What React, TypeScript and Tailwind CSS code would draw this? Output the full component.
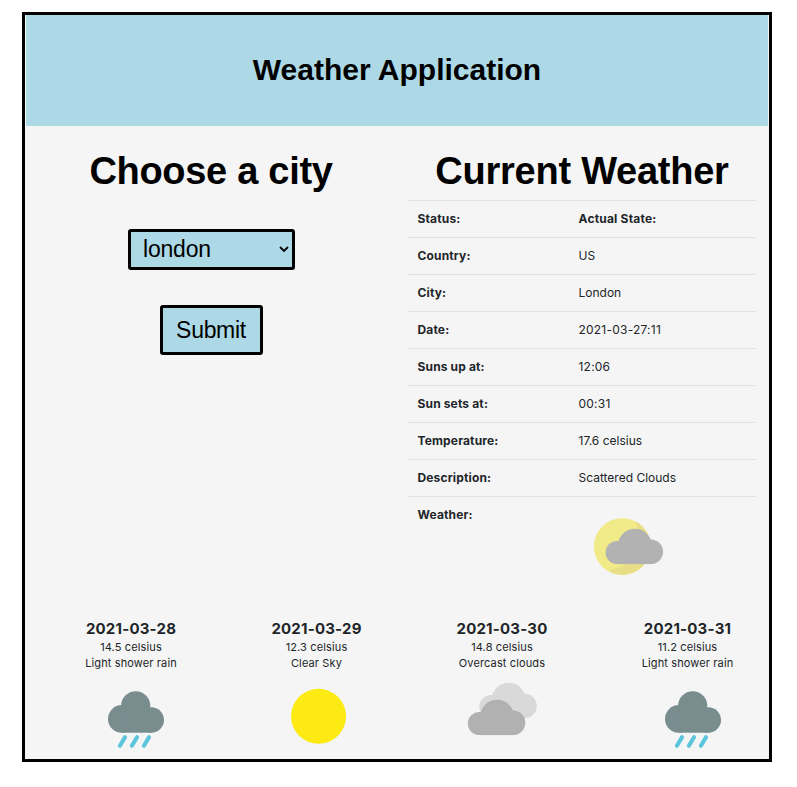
import React from 'react';

const ROWS: [string, string, boolean?][] = [
  ['Status:', 'Actual State:'],
  ['Country:', 'US'],
  ['City:', 'London'],
  ['Date:', '2021-03-27:11', true],
  ['Suns up at:', '12:06', true],
  ['Sun sets at:', '00:31', true],
  ['Temperature:', '17.6 celsius'],
  ['Description:', 'Scattered Clouds'],
];

function Cloud({ fill, x = 0, y = 0 }: { fill: string; x?: number; y?: number }) {
  return (
    <g fill={fill} transform={`translate(${x} ${y})`}>
      <circle cx="11.6" cy="23.8" r="11.6" />
      <circle cx="45.2" cy="23.1" r="12.3" />
      <circle cx="29.3" cy="17" r="17" />
      <rect x="11.6" y="18" width="33.6" height="17.4" />
    </g>
  );
}

function PartlyCloudy() {
  return (
    <svg width="120" height="90" viewBox="0 0 120 90" className="block">
      <defs>
        <clipPath id="sun">
          <circle cx="52.3" cy="46.6" r="28.4" />
        </clipPath>
      </defs>
      <circle cx="52.3" cy="46.6" r="28.4" fill="#f0ea88" />
      <path clipPath="url(#sun)" d="M64 19Q70 30 68 45Q62 66 40 70V80H90V19Z" fill="#e9de88" />
      <Cloud fill="#b2b2b2" x={35.6} y={28.7} />
    </svg>
  );
}

function Rain() {
  return (
    <svg width="100" height="84" viewBox="0 0 100 84" className="block">
      <g fill="#798d8f">
        <circle cx="31.8" cy="43.9" r="13.8" />
        <circle cx="61.3" cy="45" r="12.7" />
        <circle cx="45.7" cy="30.9" r="14.6" />
        <rect x="31.8" y="33" width="29.5" height="24.7" />
      </g>
      <path
        d="M35 62.2L29.9 70.8M47 62.2L41.9 70.8M59 62.2L53.9 70.8"
        stroke="#5bc5db"
        strokeWidth="4.1"
        strokeLinecap="round"
      />
    </svg>
  );
}

function Sun() {
  return (
    <svg width="100" height="84" viewBox="5.75 0 100 84" className="block">
      <circle cx="48.3" cy="41.3" r="27.5" fill="#fcea12" />
    </svg>
  );
}

function Overcast() {
  return (
    <svg width="100" height="84" viewBox="11.25 0 100 84" className="block">
      <Cloud fill="#d9d9d9" x={29.6} y={7.8} />
      <Cloud fill="#b1b1b1" x={18.1} y={24.7} />
    </svg>
  );
}

const DAYS = [
  { date: '2021-03-28', temp: '14.5 celsius', text: 'Light shower rain', Icon: Rain },
  { date: '2021-03-29', temp: '12.3 celsius', text: 'Clear Sky', Icon: Sun },
  { date: '2021-03-30', temp: '14.8 celsius', text: 'Overcast clouds', Icon: Overcast },
  { date: '2021-03-31', temp: '11.2 celsius', text: 'Light shower rain', Icon: Rain },
];

export default function App() {
  return (
    <div className="h-[787px] w-[797px] overflow-hidden bg-white pt-3 pl-[22px] font-['Inter',sans-serif] text-[#212529]">
      <div className="flex h-[750px] w-[750px] flex-col overflow-hidden border-[3px] border-black bg-[#f5f5f5]">
        <header className="mx-px flex h-[111px] shrink-0 items-center justify-center bg-[#add8e6] pb-0.5 font-['Liberation_Sans',Arial,sans-serif] text-black">
          <h1 className="text-[30px] leading-9 font-bold">Weather Application</h1>
        </header>

        <main className="flex h-[480px] shrink-0">
          <section className="flex w-[372px] flex-col items-center pt-[22px] font-['Liberation_Sans',Arial,sans-serif] text-black">
            <h2 className="text-[38px] leading-[46px] font-bold tracking-[-0.3px]">Choose a city</h2>
            <div className="relative mt-[35px] h-[41px] w-[167px]">
              <select className="h-full w-full appearance-none rounded-[3px] border-[3px] border-black bg-[#add8e6] pl-[12.5px] text-[23px] leading-[35px] tracking-[-0.2px] outline-none">
                <option>london</option>
              </select>
              <svg className="pointer-events-none absolute top-[17px] right-[6px]" width="10" height="7" viewBox="0 0 10 7" fill="none">
                <path d="M1 1L5 5L9 1" stroke="#000" strokeWidth="1.8" />
              </svg>
            </div>
            <button className="mt-[35px] h-[50px] w-[103px] rounded-[3px] border-[3px] border-black bg-[#add8e6] text-[23px] tracking-[-0.3px]">
              Submit
            </button>
          </section>

          <section className="ml-[11px] w-[348px] pt-[22px]">
            <h2 className="text-center font-['Liberation_Sans',Arial,sans-serif] text-[38px] leading-[46px] font-bold tracking-[-0.25px] whitespace-nowrap text-black">
              Current Weather
            </h2>
            <div className="mt-[6px] text-xs">
              {ROWS.map(([label, value, numeric], i) => (
                <div key={label} className="flex h-[37px] items-center border-t border-[#dee2e6] pl-[9.5px]">
                  <span className="w-[161px] font-bold tracking-[0.15px]">{label}</span>
                  <span className={i === 0 ? 'font-bold tracking-[0.2px]' : numeric ? 'tracking-[0.22px]' : ''}>
                    {value}
                  </span>
                </div>
              ))}
              <div className="flex border-t border-[#dee2e6] pl-[9.5px]">
                <span className="w-[152.5px] pt-[9px] leading-[18px] font-bold tracking-[0.15px]">Weather:</span>
                <div className="mt-[3px]">
                  <PartlyCloudy />
                </div>
              </div>
            </div>
          </section>
        </main>

        <footer className="ml-[13.25px] grid w-[742px] shrink-0 grid-cols-4 pt-[13px]">
          {DAYS.map(({ date, temp, text, Icon }) => (
            <div key={date} className="text-center">
              <h3 className="text-[15px] leading-5 font-bold tracking-[0.2px]">{date}</h3>
              <p className="text-[11px] leading-4 tracking-[0.13px]">{temp}</p>
              <p className="text-[11px] leading-4 tracking-[0.13px]">{text}</p>
              <div className="mt-[4px] ml-[51.75px]">
                <Icon />
              </div>
            </div>
          ))}
        </footer>
      </div>
    </div>
  );
}
